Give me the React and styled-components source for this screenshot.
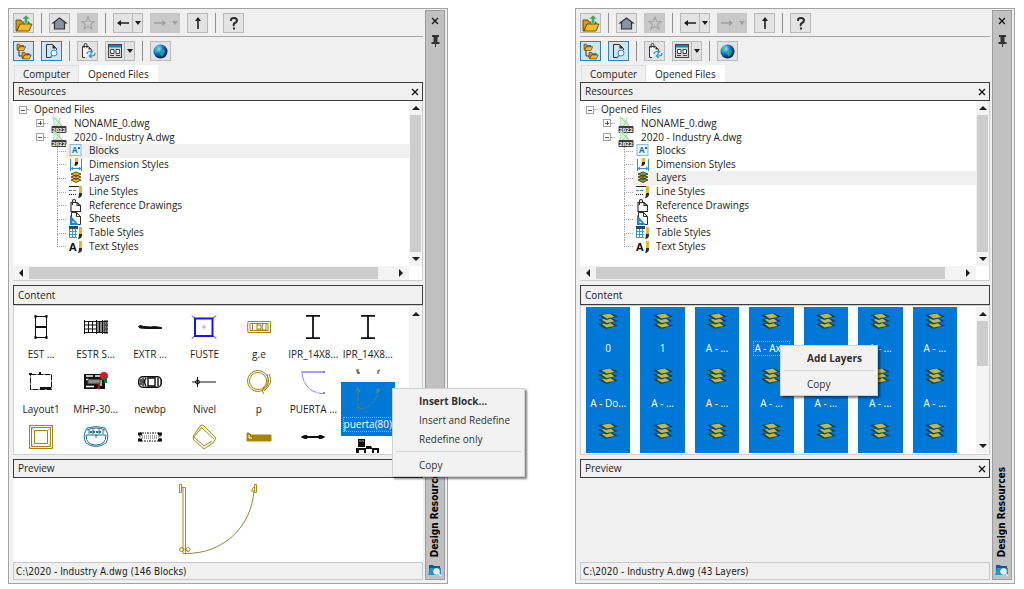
import React from 'react';
import styled, { createGlobalStyle, css } from 'styled-components';

const GlobalStyle = createGlobalStyle`
  * {
    box-sizing: border-box;
  }

  body {
    margin: 0;
    background: #fff;
    color: #1c1c1c;
    font: 10px/13px "Open Sans", "Noto Sans", sans-serif;
  }

  button {
    margin: 0;
    padding: 0;
    border: 0;
    background: none;
    color: inherit;
    font: inherit;
  }

  svg {
    display: block;
    flex: none;
    overflow: visible;
  }
`;

const Page = styled.main`
  display: grid;
  grid-template-columns: 1fr 1fr;
  gap: 127px;
  align-items: start;
  padding: 8px 9px 4px 8px;
`;

const Palette = styled.section`
  position: relative;
  display: grid;
  grid-template-columns: minmax(0, 1fr) 20px;
  gap: 2px;
  padding: 1px 2px 3px 4px;
  border: 1px solid #a3a3a3;
  background: #f0f0f0;
`;

const Body = styled.div`
  display: flex;
  flex-direction: column;
  min-width: 0;
`;

const Toolbar = styled.div`
  display: flex;
  gap: 7px;
  padding: ${({ $line }) => ($line ? '3px 0' : '4px 0')};
  border-bottom: ${({ $line }) => ($line ? '1px solid #a6a6a6' : '0')};
`;

const Separator = styled.span`
  width: 1px;
  height: 20px;
  background: #8f8f8f;
`;

const ToolButton = styled.button`
  display: flex;
  align-items: center;
  justify-content: center;
  width: 21px;
  height: 20px;
  border: 1px solid #b9b9b9;
  background: #e3e3e3;

  ${({ $active }) => $active && css`
    border-color: #2f7fb8;
    background: #cfe5f5;
  `}

  &:disabled {
    border-color: #c6c6c6;
    background: #c9c9c9;
    color: #a0a0a0;
  }
`;

const Split = styled.div`
  display: flex;

  > :first-child {
    width: 20px;
  }

  > :last-child {
    width: 10px;
    border-left: 0;
  }
`;

const Tabs = styled.div`
  display: flex;
  padding-left: 1px;
`;

const Tab = styled.button`
  height: 17px;
  padding: 0 8px;
  border: 1px solid ${({ $active }) => ($active ? '#fff' : '#e0e0e0')};
  border-bottom: 0;
  background: ${({ $active }) => ($active ? '#fff' : '#f0f0f0')};
`;

const Header = styled.header`
  display: flex;
  align-items: center;
  justify-content: space-between;
  height: ${({ $tall }) => ($tall ? '20px' : '19px')};
  padding: 0 3px 0 4px;
  border: 1px solid #3c3c3c;
  background: #f0f0f0;

  h2 {
    margin: 0;
    font: inherit;
  }
`;

const TreeBox = styled.div`
  display: grid;
  grid-template-columns: minmax(0, 1fr) 13px;
  grid-template-rows: 165px 14px;
  margin-bottom: 4px;
  border: solid #cfcfcf;
  border-width: 0 1px 1px 0;
  background: #fff;
`;

const TreeList = styled.ul`
  display: grid;
  grid-auto-rows: 1fr;
  height: 152px;
  margin: 0;
  padding: 2px 0 0;
  list-style: none;
`;

const TreeRow = styled.li`
  display: flex;
  align-items: center;
  min-height: 0;
  padding-left: ${({ $level }) => [ '6px', '23px', '44px' ][$level]};
`;

const Expander = styled.button`
  display: flex;
  width: 8px;
  height: 8px;
`;

const Dash = styled.span`
  width: 4px;
  border-top: 1px dotted #a8a8a8;
`;

const Branch = styled.span`
  align-self: stretch;
  width: 9px;

  &::before,
  &::after {
    content: '';
    display: block;
    height: 50%;
    border-left: 1px dotted #a0a0a0;
  }

  &::before {
    border-bottom: 1px dotted #a0a0a0;
  }

  &::after {
    display: ${({ $last }) => ($last ? 'none' : 'block')};
  }
`;

const Node = styled.button`
  display: flex;
  flex: 1;
  align-items: center;
  align-self: stretch;
  gap: 6px;
  padding-left: 3px;
  background: ${({ $current }) => ($current ? '#f0f0f0' : 'transparent')};
  white-space: nowrap;
`;

const Bar = styled.div`
  display: flex;
  flex-direction: ${({ $horizontal }) => ($horizontal ? 'row' : 'column')};
  padding: ${({ $horizontal }) => ($horizontal ? '1px 0' : '0 1px')};
  background: #f3f3f3;
`;

const BarArrow = styled.button`
  display: flex;
  flex: 0 0 ${({ $wide }) => ($wide ? '16px' : '14px')};
  align-items: center;
  justify-content: center;
`;

const Track = styled.div`
  flex: ${({ $part }) => $part} 0 0;
  background: ${({ $thumb }) => ($thumb ? '#cdcdcd' : 'transparent')};
`;

const ContentBox = styled.div`
  display: grid;
  grid-template-columns: minmax(0, 1fr) 13px;
  height: 150px;
  margin-bottom: 4px;
  padding: 1px 0;
  border: 1px solid #cfcfcf;
  background: #fff;
`;

const Columns = styled.div`
  display: grid;
  grid-template-columns: repeat(7, minmax(0, 1fr));
  height: 146px;
  padding-right: 14px;
  overflow: hidden;
`;

const Column = styled.div`
  display: flex;
  flex-direction: column;
  margin: ${({ $selected }) => ($selected ? '0 5px' : '0')};
  background: ${({ $selected }) => ($selected ? '#0078d7' : 'transparent')};
  color: ${({ $selected }) => ($selected ? '#fff' : 'inherit')};
`;

const Tile = styled.button`
  display: grid;
  flex: none;
  grid-template-rows: 40px 15px;
  justify-items: center;
  align-items: center;
  white-space: nowrap;

  ${({ $layer }) => $layer && css`
    grid-template-rows: 27px 28px;
  `}

  ${({ $selected }) => $selected && css`
    grid-template-rows: 34px 16px;
    height: 54px;
    background: #0078d7;
    color: #fff;
  `}

  ${({ $cut }) => $cut && css`
    grid-template-rows: 20px;
  `}
`;

const TileLabel = styled.span`
  border: 1px ${({ $focus }) => ($focus ? 'dotted #d9a066' : 'solid transparent')};
`;

const Leftover = styled.div`
  display: flex;
  flex: 0 0 20px;
  align-items: center;
  justify-content: center;
`;

const Preview = styled.div`
  display: flex;
  justify-content: center;
  height: 84px;
  background: ${({ $empty }) => ($empty ? '#f0f0f0' : '#fff')};
`;

const Status = styled.footer`
  height: 18px;
  padding: 2px;
  border: 1px solid #c8c8c8;
  font-family: "DejaVu Sans Condensed", "Open Sans", sans-serif;
`;

const Side = styled.aside`
  display: flex;
  flex-direction: column;
  align-items: center;
  padding: 4px 0 2px;
  border: 1px solid #9c9c9c;
  background: #c1c1c1;
`;

const SideButton = styled.button`
  display: flex;
  align-items: center;
  justify-content: center;
  width: 16px;
  height: 11px;
  margin-bottom: 9px;
`;

const SideTitle = styled.h1`
  margin: auto 0 7px;
  color: #000;
  font-family: "DejaVu Sans Condensed", "Open Sans", sans-serif;
  font-size: 10px;
  line-height: 14px;
  writing-mode: vertical-rl;
  transform: rotate(180deg);
`;

const Menu = styled.menu`
  position: absolute;
  top: ${({ $top }) => $top};
  left: ${({ $left }) => $left};
  z-index: 1;
  display: flex;
  flex-direction: column;
  width: ${({ $width }) => $width};
  margin: 0;
  padding: 3px 3px 1px;
  border: 1px solid #d0d0d0;
  background: #f2f2f2;
  box-shadow: 2px 2px 2px rgba(0, 0, 0, 0.5);

  hr {
    width: 100%;
    margin: 2px 0 4px;
    border: 0;
    border-top: 1px solid #d4d4d4;
  }
`;

const MenuItem = styled.button`
  height: 19px;
  padding-left: 23px;
  color: #303030;
  font-weight: ${({ $primary }) => ($primary ? 700 : 400)};
  text-align: left;
  white-space: nowrap;
`;

// Small glyphs

const CloseIcon = () => (
  <svg width="8" height="8" viewBox="0 0 8 8" stroke="#111" strokeWidth="1.3">
    <path d="M1 1l6 6M7 1L1 7" />
  </svg>
);

const PinIcon = () => (
  <svg width="9" height="12" viewBox="0 0 9 12" fill="#333">
    <path d="M1 0h7v2H6.500v5H8.500v2H5v3H4V9H.5V7h2V2H1z" />
  </svg>
);

const Arrow = ({ angle = 0, small }) => (
  <svg width={small ? 6 : 8} height={small ? 4 : 8} viewBox={small ? '0 0 6 4' : '0 0 8 8'} fill="currentColor">
    {small
      ? <path d="M0 0h6L3 4z" />
      : <path d="M0 2h8L4 6z" transform={`rotate(${angle} 4 4)`} />}
  </svg>
);

const ExpandIcon = ({ open }) => (
  <svg width="8" height="8" viewBox="0 0 8 8" fill="none" shapeRendering="crispEdges">
    <rect x=".5" y=".5" width="7" height="7" fill="#fff" stroke="#a3a3a3" />
    <path d={open ? 'M2 4.500h4' : 'M2 4.500h4M4.500 2v4'} stroke="#555" />
  </svg>
);

// Toolbar icons

const folder = 'M0 2h4l1 2h6v2H4L1 11H0z';
const flap = 'M4 6h10l-3 6H1z';

const OpenIcon = () => (
  <svg width="18" height="17" viewBox="0 0 18 17" stroke="#4d3500" strokeWidth=".8">
    <path d="M1 5h5l1 2h7v3H5l-3 6H1z" fill="#d99a12" />
    <path d="M5 9h12l-3 7H2z" fill="#f6bd2a" />
    <path d="M11 0l4 4h-2.500v4h-3V4H7z" fill="#2fae62" stroke="#d7efe0" strokeWidth=".5" />
  </svg>
);

const HomeIcon = () => (
  <svg width="15" height="14" viewBox="0 0 15 14" fill="#8494a5" stroke="#333" strokeWidth="1.2">
    <path d="M1 7l6.500-5L14 7h-1.500v6h-10V7z" />
  </svg>
);

const StarIcon = () => (
  <svg width="14" height="14" viewBox="0 0 14 14" fill="none" stroke="currentColor" strokeWidth="1.1">
    <path d="M7 1l1.700 4.200 4.500.3-3.500 2.900 1.200 4.500L7 10.400l-3.900 2.500 1.200-4.500L.8 5.500l4.500-.3z" />
  </svg>
);

const LongArrow = ({ angle = 0 }) => (
  <svg width="12" height="12" viewBox="0 0 12 12" fill="currentColor">
    <path d="M0 6l4-3v2.200h8v1.600H4V9z" transform={`rotate(${angle} 6 6)`} />
  </svg>
);

const HelpIcon = () => (
  <svg width="8" height="13" viewBox="0 0 8 13" fill="none" stroke="#2c2c2c" strokeWidth="2">
    <path d="M1 4V3q0-2 3-2t3 2.500Q7 5 5 6T4 9M4 10.500v2" />
  </svg>
);

const FoldersIcon = () => (
  <svg width="16" height="17" viewBox="0 0 16 17" stroke="#4d3500" strokeWidth="1">
    <path d="M3 7v6h4" fill="none" stroke="#333" />
    <g transform="translate(1 0) scale(.62)">
      <path d={folder} fill="#d99a12" />
      <path d={flap} fill="#f6bd2a" />
    </g>
    <g transform="translate(6 8) scale(.66)">
      <path d={folder} fill="#d99a12" />
      <path d={flap} fill="#f6bd2a" />
    </g>
  </svg>
);

const PreviewIcon = () => (
  <svg width="15" height="16" viewBox="0 0 15 16" fill="none">
    <path d="M6 14.500H2.500V1.500h6l4 4V7" stroke="#333" />
    <path d="M8.500 1.500v4h4z" fill="#333" />
    <circle cx="10" cy="10" r="3" fill="#eaf5fc" stroke="#2d8fc0" />
    <path d="M8 12.500l-2 2.500" stroke="#2d8fc0" strokeWidth="1.300" />
  </svg>
);

const ReloadIcon = () => (
  <svg width="16" height="16" viewBox="0 0 16 16" fill="none">
    <path d="M5 14.500H2.500V3.500h6l3 3v1" fill="#f5f5f5" stroke="#333" />
    <path d="M4 5V2q0-1.500 1.500-1.500T7 2v3" stroke="#333" />
    <path d="M8.500 3.500v3h3z" fill="#333" />
    <path d="M7 11q0-2.500 3-2.500h2M10.500 6.500l2 2-2 2M15 10q0 3-3 3h-2M11.500 11l-2 2 2 2" stroke="#2f95d0" strokeWidth="1.200" />
  </svg>
);

const ViewIcon = () => (
  <svg width="14" height="14" viewBox="0 0 14 14">
    <rect x=".5" y=".5" width="13" height="13" fill="#d8d8d8" stroke="#444" />
    <path d="M1 1h12v2.500H1z" fill="#247eae" />
    <path d="M2.500 5.500h3.500v4H2.500zM8 5.500h3.500v4H8z" fill="#fff" stroke="#444" />
    <path d="M2 11.500h4M8 11.500h4" stroke="#444" />
  </svg>
);

const GlobeIcon = () => (
  <svg width="15" height="15" viewBox="0 0 15 15">
    <defs>
      <radialGradient id="globe" cx="35%" cy="30%" r="75%">
        <stop offset="0" stopColor="#a8f0ff" />
        <stop offset=".4" stopColor="#1a86cc" />
        <stop offset="1" stopColor="#07104a" />
      </radialGradient>
    </defs>
    <circle cx="7.500" cy="7.500" r="7" fill="url(#globe)" />
    <path d="M2 5q2-2 4-2l-1 3-2 1v2q-2-1-1-4zM9 6l3 1-1 3-2 3-2-3z" fill="#23c080" fillOpacity=".7" />
  </svg>
);

// Tree icons

const brush = <path d="M10 1h3v7h-3z" fill="#f0b428" />;
const brushTip = <path d="M10 8h3v2q-1 3-4 3 1-2 1-5z" fill="#2b2b2b" />;

const treeIcons = {
  dwg: (
    <svg width="17" height="16" viewBox="0 0 17 16">
      <path d="M2 11q2-3 0-9 6 2 9 9z" fill="#dff3dc" stroke="#a9d8a4" strokeWidth=".8" />
      <path d="M5 11Q9 8 9 2M3 3l8 8" stroke="#8ccb96" fill="none" strokeWidth=".7" />
      <rect x=".5" y="11" width="15" height="7" rx="1" fill="#3d3d3d" />
      <text x="1" y="17" fill="#fff" fontSize="6" fontWeight="700">2022</text>
    </svg>
  ),
  blocks: (
    <svg width="14" height="13" viewBox="0 0 14 13">
      <rect x="1" y=".5" width="11" height="11" fill="#e8f4fc" stroke="#86bbdf" />
      <text x="3" y="9" fill="#1c6fb5" fontSize="8" fontWeight="700">A</text>
      <path d="M9 3h2v2H9z" fill="#1c6fb5" />
    </svg>
  ),
  dimension: (
    <svg width="14" height="13" viewBox="0 0 14 13" fill="none">
      <path d="M1.500 1v12M12.500 1v12M2 10.500h10M4 9l-2 1.500L4 12M10 9l2 1.500-2 1.500" stroke="#2f8fd0" />
      <path d="M6 0h3v4H6z" fill="#f0b428" />
      <path d="M6 4h3v2q-1 2-4 2 1-1 1-4z" fill="#222" />
    </svg>
  ),
  layers: (
    <svg width="14" height="13" viewBox="0 0 14 13" fill="#e8bd20" stroke="#382c00" strokeWidth=".8">
      <path d="M2 9l5-2 5 2-5 2.500zM2 6l5-2 5 2-5 2.500zM2 3l5-2 5 2-5 2.500z" />
    </svg>
  ),
  layersCurrent: (
    <svg width="14" height="13" viewBox="0 0 14 13" fill="#8d9733" stroke="#26301a" strokeWidth=".8">
      <path d="M2 9l5-2 5 2-5 2.500zM2 6l5-2 5 2-5 2.500zM2 3l5-2 5 2-5 2.500z" />
    </svg>
  ),
  line: (
    <svg width="14" height="13" viewBox="0 0 14 13" fill="none">
      <path d="M0 1.500h13" stroke="#222" />
      <path d="M0 5.500h8" stroke="#2f8fd0" strokeDasharray="3 1" />
      <path d="M0 9.500h8" stroke="#222" strokeDasharray="1 1" />
      {brush}{brushTip}
    </svg>
  ),
  reference: (
    <svg width="14" height="13" viewBox="0 0 14 13" fill="none" stroke="#2b2b2b" strokeWidth="1.100">
      <path d="M2 12.500v-9h6l3.500 3v6zM8 3.500v3h3.500" />
      <path d="M3.500 6V2q0-1.500 1.500-1.500T6.500 2v2" />
    </svg>
  ),
  sheets: (
    <svg width="14" height="13" viewBox="0 0 14 13" fill="none">
      <path d="M2.500 12.500V.5h5l4 4v8zM7.500.5v4h4" stroke="#2b2b2b" />
      <path d="M1 3v10h9zM3.500 8.500V11H6z" fill="#1f86cb" fillRule="evenodd" />
    </svg>
  ),
  table: (
    <svg width="14" height="13" viewBox="0 0 14 13" fill="none">
      <path d="M.5 2v9.500H8M.5 5.500H8M.5 8.500H8M3.500 2v9.500M6.500 2v9.500" stroke="#3a9bd0" />
      <path d="M0 0h9v3H0z" fill="#19506e" />
      {brush}{brushTip}
    </svg>
  ),
  text: (
    <svg width="14" height="13" viewBox="0 0 14 13">
      <text x="0" y="11" fill="#111" fontSize="11" fontWeight="700">A</text>
      {brush}{brushTip}
    </svg>
  )
};

// Block thumbnails

const LayerIcon = () => (
  <svg width="20" height="16" viewBox="0 0 20 16">
    {[ 9, 4.5, 0 ].map((y) => (
      <g key={y} transform={`translate(0 ${y})`}>
        <path d="M0 2L12 0l8 3.500L8 7z" fill="#15424c" />
        <path d="M3.500 2L12 .5 16.500 4l-8 1.600z" fill="#bdb94e" />
      </g>
    ))}
  </svg>
);

const Thumb = ({ color = '#111', children }) => (
  <svg width="24" height="24" viewBox="0 0 24 24" fill="none" stroke={color}>{children}</svg>
);

const beam = <Thumb><path d="M5 .9h14M5 23.100h14" strokeWidth="1.800" /><path d="M12 1v22" strokeWidth="1.800" /></Thumb>;

const thumbs = {
  est: (
    <Thumb>
      <path d="M6.500 1.500h11v21h-11z" />
      <path d="M6 12h12" strokeWidth="2" />
      <path d="M5.500 0h2v3h-2zM16.500 0h2v3h-2zM5.500 21h2v3h-2zM16.500 21h2v3h-2z" fill="#111" stroke="none" />
    </Thumb>
  ),
  estr: (
    <Thumb>
      <path d="M0 6.500h24M0 10h24M0 14h24M0 17.500h24M.5 5v14M4.500 6v12M8.500 6v12M12.500 5v14M15.500 6v12M18.500 5v14M21 5v14M23 5v14" />
      <path d="M13 8h10M13 12h10M13 16h10" strokeDasharray="2 1" />
    </Thumb>
  ),
  extr: (
    <Thumb>
      <path d="M.5 11.500l2-1 3 1 7 .5 4-.5 7 1v1H10l-8-.500z" fill="#111" />
    </Thumb>
  ),
  fuste: (
    <Thumb color="#1717e6">
      <path d="M3 3.500h17.500V21H3z" strokeWidth="2" />
      <path d="M0 .5l3 3M24 .5l-3 3M0 23.500l3-3M24 23.500l-3-3" />
      <path d="M12 10v4M10 12h4" stroke="#aaa" />
    </Thumb>
  ),
  ge: (
    <Thumb color="#a98309">
      <path d="M1 6.500h22.500v11H1q-1-5 0-11zM3 8.500h18v7H3zM5.500 8v8M10 9v6M10 10h4v4h-4M16 9l-1 3 1 3M19 9v6M11 15h8" />
    </Thumb>
  ),
  beam,
  layout: (
    <Thumb>
      <path d="M1.500 4.500h21v15h-21z" strokeDasharray="6 1" />
      <path d="M0 4h3M10 3h2M11 18h11" strokeWidth="2" />
    </Thumb>
  ),
  mhp: (
    <Thumb>
      <path d="M0 4h21v15H0z" fill="#111" stroke="none" />
      <path d="M2 6h7M11 6h5M2 9.500h3M17 10v6M2 16.500h8" stroke="#fff" strokeWidth="1.300" />
      <path d="M4 9.500h12v4H4z" fill="#8c8c8c" stroke="#555" />
      <circle cx="20" cy="6" r="4" fill="#e01622" stroke="none" />
      <path d="M20 8h3v5h-3z" fill="#14702c" stroke="none" />
      <path d="M12 13.500h3v5h-2" stroke="#e01622" strokeWidth="1.500" />
    </Thumb>
  ),
  newbp: (
    <Thumb>
      <rect x=".8" y="6.800" width="22.400" height="10.400" rx="4" strokeWidth="1.600" />
      <path d="M8 8q-3 4 0 8M10 8h7v8h-7zM20 8v8M3 9v6M5 8v8" strokeWidth="1.400" />
    </Thumb>
  ),
  nivel: (
    <Thumb>
      <path d="M0 12h24M5.500 7v10" />
      <circle cx="5.500" cy="12" r="2" />
    </Thumb>
  ),
  p: (
    <Thumb color="#a98309">
      <circle cx="11" cy="11" r="10.500" />
      <circle cx="11" cy="11" r="8.500" />
      <path d="M22 4q5 9-5 17M20 4q4 9-5 16M15 20l2 4" />
    </Thumb>
  ),
  puertaOpen: (
    <Thumb color="#8b7fe6">
      <path d="M.5 2h23" strokeWidth="1.500" />
      <path d="M1 3q2 18 19 20.500h4" strokeDasharray="8 1" />
      <path d="M22 1h2v2h-2zM22 22h2v2h-2z" fill="#8b7fe6" stroke="none" />
    </Thumb>
  ),
  frame: (
    <Thumb color="#a98309">
      <path d="M.5.5h23v23H.5zM2.500 2.500h19v19h-19zM5.500 5.500h13v13h-13z" />
      <path d="M0 0l5 5M24 0l-5 5M0 24l5-5M24 24l-5-5" strokeWidth=".5" />
    </Thumb>
  ),
  sink: (
    <Thumb color="#1c6f92">
      <path d="M3 3Q12 0 21 3q5 8 1 15-10 7-20 0Q-2 11 3 3z" />
      <path d="M2 10h20q0 10-10 10T2 10zM3 5q9-4 18 0M5 5v4M9 4v5M15 4v5M19 5v4M12 9v4" />
      <path d="M6 7h12" strokeDasharray="2 1" strokeWidth="2" />
    </Thumb>
  ),
  machine: (
    <Thumb>
      <path d="M0 9h4M20 9h4M0 15h4M20 15h4" strokeWidth="3" />
      <path d="M2 8h20v8H2z" strokeDasharray="1 1 2 1" />
      <path d="M2 12h20" stroke="#aaa" strokeWidth="4" strokeDasharray="1 1" />
    </Thumb>
  ),
  chair: (
    <Thumb color="#a98309">
      <path d="M8 1l3-1 13 13-3 5-9 6L1 14l1-4zM10 2L2 12M2 12l10 9 8-5M9 2l13 12" />
    </Thumb>
  ),
  slab: (
    <Thumb color="#a98309">
      <path d="M0 8h2l2 2h20v6H0z" fill="#a98309" />
      <path d="M2 10v3h3" stroke="#fff" />
    </Thumb>
  ),
  link: (
    <Thumb>
      <path d="M1 12h22" strokeWidth="2" />
      <path d="M.5 12l3-1.500H6v3H3.500zM23.500 12l-3-1.500H18v3h2.500z" fill="#111" />
    </Thumb>
  ),
  door: (
    <svg width="24" height="24" viewBox="0 0 24 24" fill="none" stroke="#5d8070">
      <path d="M2 4v18M4 22Q19 20 22 4" strokeDasharray="5 1" />
      <path d="M0 4l2-3 2 4M21 6V2h2v3" stroke="#87855a" />
      <circle cx="2.500" cy="21.500" r="1.500" />
    </svg>
  ),
  desk: (
    <svg width="24" height="14" viewBox="0 0 24 14" fill="#111">
      <path d="M2 0h7v8H2zM0 9h10v5H8v-3H3v3H0zM10 7h5l1 2h7v5h-2v-3h-3v3h-2v-4h-6z" />
      <path d="M3 2h5" stroke="#999" />
    </svg>
  )
};

const DoorPreview = () => (
  <svg width="80" height="84" viewBox="0 0 80 84" fill="none" stroke="#b08a10">
    <path d="M1.500 6.500h2v8h-2zM4 9.500h3.500v66h-2.500V10M76.500 6.500h2v8h-2zM76 9l-2 2v3" />
    <path d="M7 75.500C46 76 74 48 76 12" stroke="#8f8640" />
    <circle cx="3.500" cy="71.500" r="2" />
    <circle cx="10" cy="71.500" r="2" />
    <path d="M4 70l6 3" />
  </svg>
);

const SideIcon = () => (
  <svg width="14" height="13" viewBox="0 0 14 13">
    <path d="M1 1h4l1 1h6v8H1z" fill="#125b88" />
    <path d="M2 4h11v7H0z" fill="#2c93c4" />
    <circle cx="8.500" cy="7.500" r="2.800" fill="#d9eef8" stroke="#fff" />
    <path d="M10.500 9.500L13 12" stroke="#e8f4fa" strokeWidth="1.500" />
  </svg>
);

const treeRows = [
  { level: 0, label: 'Opened Files', open: true },
  { level: 1, label: 'NONAME_0.dwg', icon: 'dwg', open: false },
  { level: 1, label: '2020 - Industry A.dwg', icon: 'dwg', open: true },
  { level: 2, label: 'Blocks', icon: 'blocks' },
  { level: 2, label: 'Dimension Styles', icon: 'dimension' },
  { level: 2, label: 'Layers', icon: 'layers' },
  { level: 2, label: 'Line Styles', icon: 'line' },
  { level: 2, label: 'Reference Drawings', icon: 'reference' },
  { level: 2, label: 'Sheets', icon: 'sheets' },
  { level: 2, label: 'Table Styles', icon: 'table' },
  { level: 2, label: 'Text Styles', icon: 'text' }
];

const blockColumns = [
  [ [ 'est', 'EST ...' ], [ 'layout', 'Layout1' ], [ 'frame' ] ],
  [ [ 'estr', 'ESTR S...' ], [ 'mhp', 'MHP-30...' ], [ 'sink' ] ],
  [ [ 'extr', 'EXTR ...' ], [ 'newbp', 'newbp' ], [ 'machine' ] ],
  [ [ 'fuste', 'FUSTE' ], [ 'nivel', 'Nivel' ], [ 'chair' ] ],
  [ [ 'ge', 'g.e' ], [ 'p', 'p' ], [ 'slab' ] ],
  [ [ 'beam', 'IPR_14X8...' ], [ 'puertaOpen', 'PUERTA ...' ], [ 'link' ] ]
];

const layerColumns = [
  [ '0', 'A - Do...' ],
  [ '1', 'A - ...' ],
  [ 'A - ...', 'A - ...' ],
  [ 'A - Ax...', 'A - ...' ],
  [ '', 'A - ...' ],
  [ 'A - ...', 'A - ...' ],
  [ 'A - ...', 'A - ...' ]
];

const ScrollBar = ({ horizontal, before = 0, thumb, after = 0 }) => (
  <Bar $horizontal={horizontal}>
    <BarArrow $wide={horizontal} aria-label={horizontal ? 'Scroll left' : 'Scroll up'}>
      <Arrow angle={horizontal ? 90 : 180} />
    </BarArrow>
    <Track $part={before} />
    <Track $part={thumb} $thumb />
    <Track $part={after} />
    <BarArrow $wide={horizontal} aria-label={horizontal ? 'Scroll right' : 'Scroll down'}>
      <Arrow angle={horizontal ? -90 : 0} />
    </BarArrow>
  </Bar>
);

const Toolbars = () => (
  <>
    <Toolbar $line>
      <ToolButton aria-label="Open"><OpenIcon /></ToolButton>
      <Separator />
      <ToolButton aria-label="Home"><HomeIcon /></ToolButton>
      <ToolButton aria-label="Favorites" disabled><StarIcon /></ToolButton>
      <Separator />
      <Split>
        <ToolButton aria-label="Back"><LongArrow /></ToolButton>
        <ToolButton aria-label="Back history"><Arrow small /></ToolButton>
      </Split>
      <Split>
        <ToolButton aria-label="Forward" disabled><LongArrow angle={180} /></ToolButton>
        <ToolButton aria-label="Forward history" disabled><Arrow small /></ToolButton>
      </Split>
      <ToolButton aria-label="Up"><LongArrow angle={90} /></ToolButton>
      <Separator />
      <ToolButton aria-label="Help"><HelpIcon /></ToolButton>
    </Toolbar>
    <Toolbar>
      <ToolButton aria-label="Tree" $active><FoldersIcon /></ToolButton>
      <ToolButton aria-label="Preview" $active><PreviewIcon /></ToolButton>
      <Separator />
      <ToolButton aria-label="Reload"><ReloadIcon /></ToolButton>
      <Split>
        <ToolButton aria-label="View"><ViewIcon /></ToolButton>
        <ToolButton aria-label="View options"><Arrow small /></ToolButton>
      </Split>
      <Separator />
      <ToolButton aria-label="Web"><GlobeIcon /></ToolButton>
    </Toolbar>
  </>
);

const Tree = ({ current }) => (
  <TreeBox>
    <TreeList>
      {treeRows.map(({ level, label, icon, open }, index) => (
        <TreeRow key={label} $level={level}>
          {level < 2 ? (
            <>
              <Expander aria-label={open ? 'Collapse' : 'Expand'}><ExpandIcon open={open} /></Expander>
              <Dash />
            </>
          ) : <Branch $last={index === treeRows.length - 1} />}
          <Node $current={label === current}>
            {icon && treeIcons[icon === 'layers' && label === current ? 'layersCurrent' : icon]}
            {label}
          </Node>
        </TreeRow>
      ))}
    </TreeList>
    <ScrollBar thumb={1} />
    <ScrollBar horizontal thumb={96} after={4} />
  </TreeBox>
);

const BlockGrid = () => (
  <Columns>
    {blockColumns.map((tiles) => (
      <Column key={tiles[0][0]}>
        {tiles.map(([ icon, label ]) => (
          <Tile key={icon} aria-label={label || icon}>
            {thumbs[icon]}
            {label && <TileLabel>{label}</TileLabel>}
          </Tile>
        ))}
      </Column>
    ))}
    <Column>
      <Tile>
        {thumbs.beam}
        <TileLabel>IPR_14X8...</TileLabel>
      </Tile>
      <Leftover>
        <svg width="24" height="6" viewBox="0 0 24 6" fill="none" stroke="#77704a" strokeWidth="1.500">
          <path d="M0 2l2-1v4M1 3l3 1M22 5V2l2-1" />
        </svg>
      </Leftover>
      <Tile $selected>
        {thumbs.door}
        <TileLabel $focus>puerta(80)</TileLabel>
      </Tile>
      <Tile $cut aria-label="desk">{thumbs.desk}</Tile>
    </Column>
  </Columns>
);

const LayerGrid = () => (
  <Columns>
    {layerColumns.map((labels, column) => (
      <Column key={column} $selected>
        {labels.map((label, row) => (
          <Tile key={row} $layer>
            <LayerIcon />
            {label && <TileLabel $focus={label === 'A - Ax...'}>{label}</TileLabel>}
          </Tile>
        ))}
        <Tile $layer aria-label="Layer"><LayerIcon /></Tile>
      </Column>
    ))}
  </Columns>
);

const ResourcePalette = ({ current, grid, scroll, preview, status, menu }) => (
  <Palette>
    <Body>
      <Toolbars />
      <Tabs role="tablist">
        <Tab role="tab">Computer</Tab>
        <Tab role="tab" aria-selected $active>Opened Files</Tab>
      </Tabs>
      <Header>
        <h2>Resources</h2>
        <button aria-label="Close resources"><CloseIcon /></button>
      </Header>
      <Tree current={current} />
      <Header $tall><h2>Content</h2></Header>
      <ContentBox>
        {grid}
        <ScrollBar {...scroll} />
      </ContentBox>
      <Header>
        <h2>Preview</h2>
        <button aria-label="Close preview"><CloseIcon /></button>
      </Header>
      <Preview $empty={!preview}>{preview}</Preview>
      <Status>{status}</Status>
    </Body>
    <Side>
      <SideButton aria-label="Close"><CloseIcon /></SideButton>
      <SideButton aria-label="Pin"><PinIcon /></SideButton>
      <SideTitle>Design Resources</SideTitle>
      <SideIcon />
    </Side>
    {menu}
  </Palette>
);

const App = () => (
  <>
    <GlobalStyle />
    <Page>
      <ResourcePalette
        current="Blocks"
        grid={<BlockGrid />}
        scroll={{ before: 70, thumb: 20, after: 10 }}
        preview={<DoorPreview />}
        status="C:\2020 - Industry A.dwg (146 Blocks)"
        menu={(
          <Menu $top="379px" $left="383px" $width="133px">
            <MenuItem $primary>Insert Block...</MenuItem>
            <MenuItem>Insert and Redefine</MenuItem>
            <MenuItem>Redefine only</MenuItem>
            <hr />
            <MenuItem>Copy</MenuItem>
          </Menu>
        )}
      />
      <ResourcePalette
        current="Layers"
        grid={<LayerGrid />}
        scroll={{ thumb: 38, after: 62 }}
        status="C:\2020 - Industry A.dwg (43 Layers)"
        menu={(
          <Menu $top="336px" $left="204px" $width="98px">
            <MenuItem $primary>Add Layers</MenuItem>
            <hr />
            <MenuItem>Copy</MenuItem>
          </Menu>
        )}
      />
    </Page>
  </>
);

export default App;
